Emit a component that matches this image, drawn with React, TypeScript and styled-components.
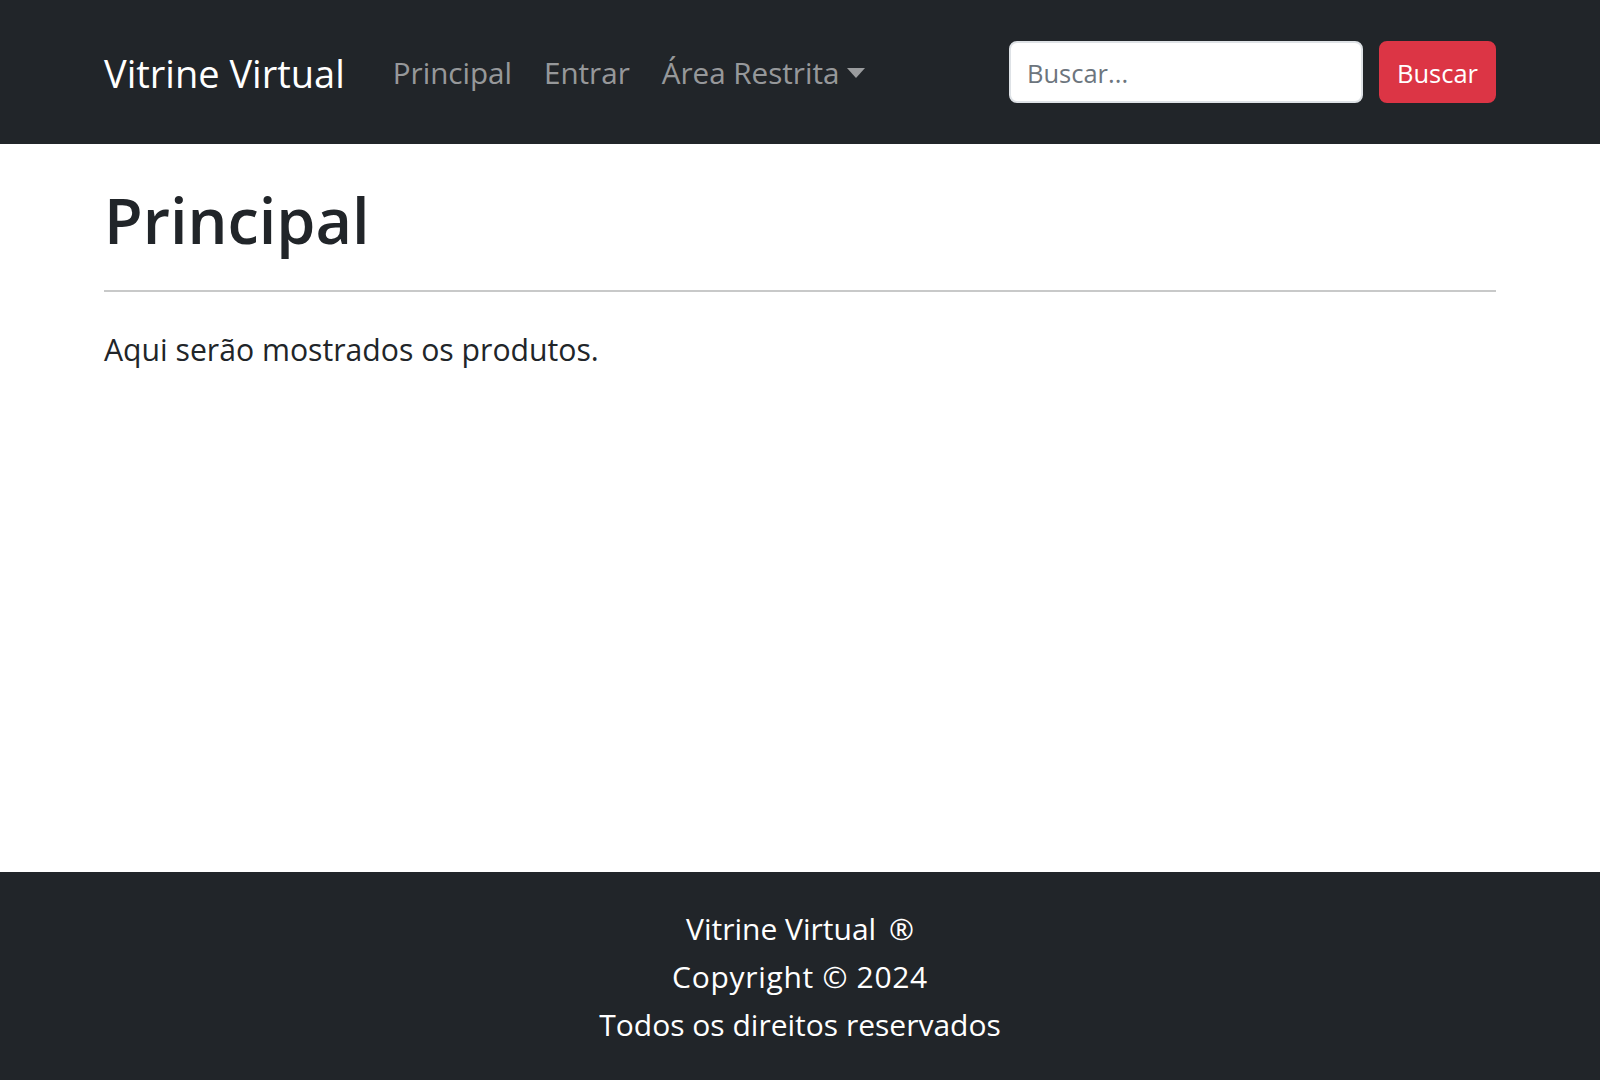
import * as React from 'react';
import styled, { createGlobalStyle } from 'styled-components';

const GlobalStyle = createGlobalStyle`
  html, body {
    margin: 0;
    padding: 0;
  }
  body {
    font-family: 'Open Sans', 'Noto Sans', Arial, sans-serif;
    color: #212529;
    background: #fff;
  }
  * {
    box-sizing: border-box;
  }
`;

const Page = styled.div`
  min-height: 100vh;
  display: flex;
  flex-direction: column;
`;

const Container = styled.div`
  width: 1392px;
  margin: 0 auto;
`;

const Navbar = styled.nav`
  background: #212529;
  padding: 32px 0;
`;

const NavInner = styled(Container)`
  display: flex;
  align-items: center;
  height: 80px;
`;

const Brand = styled.a`
  color: #fff;
  font-size: 38px;
  line-height: 60px;
  padding: 11px 0 9px;
  margin-right: 32px;
  text-decoration: none;
`;

const NavList = styled.ul`
  display: flex;
  list-style: none;
  margin: 0;
  padding: 0;
`;

const NavLink = styled.a`
  display: block;
  padding: 17px 16px 15px;
  font-size: 29.6px;
  line-height: 48px;
  color: rgba(255, 255, 255, 0.55);
  text-decoration: none;
`;

const Caret = styled.span`
  display: inline-block;
  margin-left: 8px;
  vertical-align: 6px;
  border-top: 10px solid;
  border-left: 9px solid transparent;
  border-right: 9px solid transparent;
`;

const SearchForm = styled.form`
  display: flex;
  margin-left: auto;
  gap: 16px;
`;

const SearchInput = styled.input`
  width: 354px;
  height: 62px;
  padding: 9px 16px 7px;
  font-family: inherit;
  font-size: 25.5px;
  color: #212529;
  background: #fff;
  border: 2px solid #dee2e6;
  border-radius: 8px;
  outline: none;

  &::placeholder {
    color: #6c757d;
  }
`;

const DangerButton = styled.button`
  height: 62px;
  padding: 9px 16px 7px;
  font-family: inherit;
  font-size: 25.5px;
  color: #fff;
  background: #dc3545;
  border: 2px solid #dc3545;
  border-radius: 8px;
`;

const Main = styled.main`
  flex: 1;
  padding-top: 32px;
`;

const Title = styled.h1`
  margin: 0 0 16px;
  padding-top: 3px;
  font-size: 63px;
  font-weight: 600;
  line-height: 82px;
`;

const Divider = styled.hr`
  margin: 29px 0 34px;
  border: 0;
  border-top: 2px solid #c8c9c9;
`;

const Lead = styled.p`
  margin: 0 0 32px;
  font-size: 30.2px;
  line-height: 48px;
`;

const Footer = styled.footer`
  background: #212529;
  color: #fff;
  text-align: center;
  padding: 33px 0 31px;
  font-size: 30px;
  line-height: 48px;
`;

const FooterLine = styled.div<{ $spacing?: number }>`
  letter-spacing: ${({ $spacing }) => $spacing ?? 0}px;
`;

const RegMark = styled.span`
  margin-left: 5px;
`;

export default function App() {
  return (
    <>
      <GlobalStyle />
      <Page>
        <Navbar>
          <NavInner>
            <Brand href="#">Vitrine Virtual</Brand>
            <NavList>
              <li>
                <NavLink href="#">Principal</NavLink>
              </li>
              <li>
                <NavLink href="#">Entrar</NavLink>
              </li>
              <li>
                <NavLink href="#">
                  Área Restrita
                  <Caret />
                </NavLink>
              </li>
            </NavList>
            <SearchForm onSubmit={(e) => e.preventDefault()}>
              <SearchInput type="search" placeholder="Buscar..." />
              <DangerButton type="submit">Buscar</DangerButton>
            </SearchForm>
          </NavInner>
        </Navbar>
        <Main>
          <Container>
            <Title>Principal</Title>
            <Divider />
            <Lead>Aqui serão mostrados os produtos.</Lead>
          </Container>
        </Main>
        <Footer>
          <FooterLine>
            Vitrine Virtual <RegMark>®</RegMark>
          </FooterLine>
          <FooterLine $spacing={0.7}>Copyright © 2024</FooterLine>
          <FooterLine>Todos os direitos reservados</FooterLine>
        </Footer>
      </Page>
    </>
  );
}
